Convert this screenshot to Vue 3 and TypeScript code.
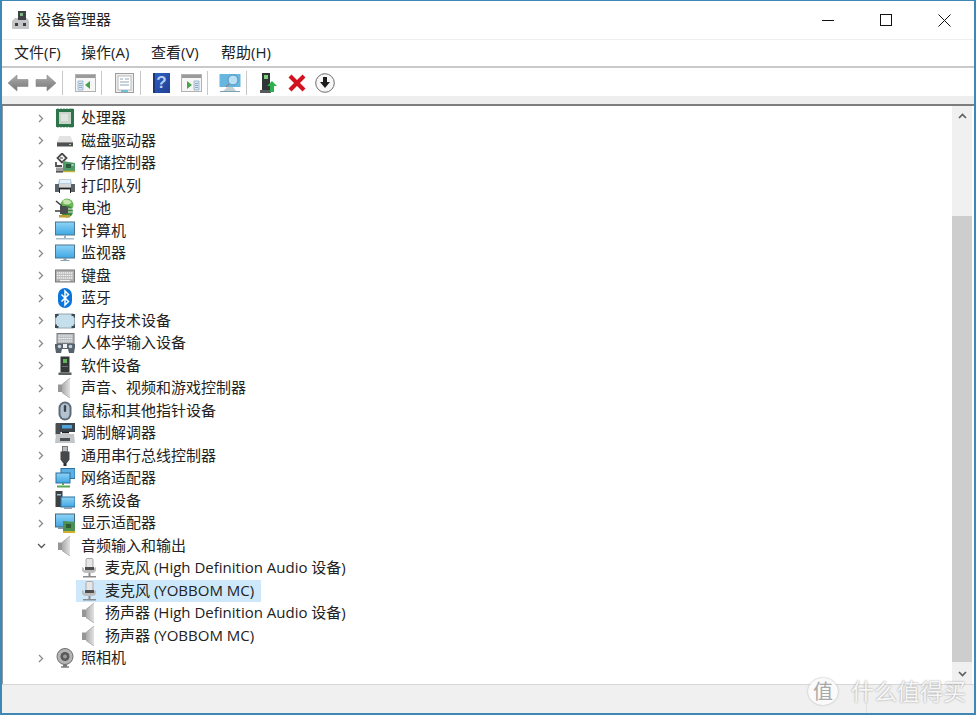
<script setup lang="ts">
interface TreeRow {
  label: string
  icon: string
  state: 'closed' | 'open' | 'child' | 'selected'
}

const menus: string[] = ['文件(F)', '操作(A)', '查看(V)', '帮助(H)']

const rows: TreeRow[] = [
  { label: '处理器', icon: 'cpu', state: 'closed' },
  { label: '磁盘驱动器', icon: 'disk', state: 'closed' },
  { label: '存储控制器', icon: 'storage', state: 'closed' },
  { label: '打印队列', icon: 'printer', state: 'closed' },
  { label: '电池', icon: 'battery', state: 'closed' },
  { label: '计算机', icon: 'computer', state: 'closed' },
  { label: '监视器', icon: 'monitor', state: 'closed' },
  { label: '键盘', icon: 'keyboard', state: 'closed' },
  { label: '蓝牙', icon: 'bluetooth', state: 'closed' },
  { label: '内存技术设备', icon: 'memory', state: 'closed' },
  { label: '人体学输入设备', icon: 'hid', state: 'closed' },
  { label: '软件设备', icon: 'software', state: 'closed' },
  { label: '声音、视频和游戏控制器', icon: 'speaker', state: 'closed' },
  { label: '鼠标和其他指针设备', icon: 'mouse', state: 'closed' },
  { label: '调制解调器', icon: 'modem', state: 'closed' },
  { label: '通用串行总线控制器', icon: 'usb', state: 'closed' },
  { label: '网络适配器', icon: 'network', state: 'closed' },
  { label: '系统设备', icon: 'system', state: 'closed' },
  { label: '显示适配器', icon: 'display', state: 'closed' },
  { label: '音频输入和输出', icon: 'speaker', state: 'open' },
  { label: '麦克风 (High Definition Audio 设备)', icon: 'mic', state: 'child' },
  { label: '麦克风 (YOBBOM MC)', icon: 'mic', state: 'selected' },
  { label: '扬声器 (High Definition Audio 设备)', icon: 'speaker', state: 'child' },
  { label: '扬声器 (YOBBOM MC)', icon: 'speaker', state: 'child' },
  { label: '照相机', icon: 'camera', state: 'closed' },
]
</script>

<template>
  <div class="window">
    <svg class="defs" width="0" height="0" aria-hidden="true">
      <defs>
        <linearGradient id="arrowGray" x1="0" y1="0" x2="0" y2="1">
          <stop offset="0" stop-color="#adadad" />
          <stop offset="1" stop-color="#767676" />
        </linearGradient>
        <linearGradient id="screenBlue" x1="0" y1="0" x2="0" y2="1">
          <stop offset="0" stop-color="#8fd4f7" />
          <stop offset="1" stop-color="#3fa6e2" />
        </linearGradient>
        <linearGradient id="helpBlue" x1="0" y1="0" x2="1" y2="1">
          <stop offset="0" stop-color="#2e62c4" />
          <stop offset="1" stop-color="#1e3f94" />
        </linearGradient>
        <linearGradient id="speakerCone" x1="0" y1="0" x2="1" y2="0">
          <stop offset="0" stop-color="#a9a9a9" />
          <stop offset="1" stop-color="#e2e2e2" />
        </linearGradient>
        <symbol id="i-cpu" viewBox="0 0 20 20">
          <rect x="1" y="1" width="18" height="18" fill="#2c7449" />
          <path d="M3 0v1M6 0v1M9 0v1M12 0v1M15 0v1M17 0v1M3 19v1M6 19v1M9 19v1M12 19v1M15 19v1M17 19v1" stroke="#6d9c7e" />
          <rect x="4" y="4" width="12" height="12" fill="#c9d4cb" />
          <rect x="6" y="6" width="7" height="7" fill="#e0e4de" />
        </symbol>
        <symbol id="i-disk" viewBox="0 0 20 20">
          <path d="M4.500 5h11l2.500 6H2z" fill="#e2e2e2" />
          <path d="M2 11h16v4.500H2z" fill="#4e5152" />
          <path d="M2 11h16v1H2z" fill="#8d8d8d" />
          <rect x="14" y="13" width="2" height="1" fill="#a9d68e" />
        </symbol>
        <symbol id="i-storage" viewBox="0 0 20 20">
          <path d="M7 0.500l4.500 4.500L7 9.500 2.500 5z" fill="none" stroke="#4a4a4a" stroke-width="1.800" />
          <path d="M5 5h3" stroke="#777" stroke-width="1.500" />
          <path d="M1 9v4h6" fill="none" stroke="#4f4f4f" stroke-width="1.800" />
          <path d="M8 8l12 2v8H8z" fill="#4f9a68" />
          <rect x="11" y="11" width="5" height="4" fill="#2a5a3c" />
          <rect x="16.500" y="11" width="2" height="2" fill="#a6d3b5" />
          <path d="M8 18.500h12" stroke="#c9b23a" stroke-width="1.400" />
          <rect x="1" y="14.500" width="7" height="5" fill="#9b9d9e" />
          <rect x="1" y="18" width="7" height="1.500" fill="#5a5a5a" />
        </symbol>
        <symbol id="i-printer" viewBox="0 0 20 20">
          <path d="M4 3h12l1 5H3z" fill="#b5d0e2" />
          <path d="M5 4h10v3H5z" fill="#e9f1f7" />
          <path d="M0 8h20v7H0z" fill="#d4d8db" />
          <path d="M0 8h4v8H0zM16 8h4v8h-4z" fill="#5c6368" />
          <path d="M4 12h12v5H4z" fill="#fff" />
          <path d="M4 12.500h12" stroke="#222" stroke-width="1.800" />
          <path d="M4.500 12v5M15.500 12v5" stroke="#222" />
        </symbol>
        <symbol id="i-battery" viewBox="0 0 20 20">
          <circle cx="12" cy="7" r="6.500" fill="#6fb55c" />
          <path d="M8 2.500c3-2 7-1 8.500 2-2 2-5 3-8 1z" fill="#c4e6ae" />
          <circle cx="12" cy="13.500" r="6" fill="#3e8a3c" />
          <path d="M1 3l6 5M0 13h7" stroke="#3c3c3c" stroke-width="1.500" />
          <path d="M5 8h6l2 2v5l-2 1H5z" fill="#4a4d4f" />
          <path d="M13 11h5M13 14h5" stroke="#e4e4e4" stroke-width="1.200" />
          <rect x="4" y="17" width="11" height="2.500" fill="#bfa02e" />
        </symbol>
        <symbol id="i-computer" viewBox="0 0 20 20">
          <rect x="0.500" y="1" width="19" height="13" fill="url(#screenBlue)" stroke="#4a7791" />
          <rect x="9" y="14" width="2" height="3" fill="#9db3c2" />
          <rect x="1" y="17" width="18" height="1.500" fill="#a9bdca" />
        </symbol>
        <symbol id="i-monitor" viewBox="0 0 20 20">
          <rect x="0.500" y="2" width="19" height="13" fill="url(#screenBlue)" stroke="#4a7791" />
          <rect x="8.500" y="15" width="3" height="2" fill="#8aa2b2" />
          <rect x="5.500" y="17" width="9" height="1" fill="#8aa2b2" />
        </symbol>
        <symbol id="i-keyboard" viewBox="0 0 20 20">
          <rect x="0.500" y="4" width="19" height="12" fill="#b0b0b0" stroke="#7a7a7a" />
          <path d="M2 7h16M2 9.500h16M2 12h16" stroke="#f2f2f2" stroke-dasharray="1.500 .5" stroke-width="1.400" />
          <path d="M5 14.500h10" stroke="#f2f2f2" stroke-width="1.200" />
        </symbol>
        <symbol id="i-bluetooth" viewBox="0 0 20 20">
          <rect x="3" y="0" width="14" height="20" rx="7" fill="#0a76dc" />
          <path d="M6.500 6.500l7 7-3.500 3.500V3l3.500 3.500-7 7" fill="none" stroke="#fff" stroke-width="1.500" />
        </symbol>
        <symbol id="i-memory" viewBox="0 0 20 20">
          <rect x="0.500" y="3" width="19" height="14" rx="1.500" fill="#c6dfed" stroke="#93a6b2" />
          <path d="M0 3h3.500v2H2v1.500H0zM16.500 3H20v3.500h-1.500V5h-2zM0 13.500h2V15h1.500v2H0zM18.500 13.500H20V17h-3.500v-2h2z" fill="#3d4a52" />
        </symbol>
        <symbol id="i-hid" viewBox="0 0 20 20">
          <rect x="2" y="0.500" width="17" height="10" fill="#b9bdc0" stroke="#767a7d" />
          <path d="M3.500 3h14M3.500 5.500h14M3.500 8h14" stroke="#f0f0f0" stroke-dasharray="1.500 .5" stroke-width="1.200" />
          <path d="M0 11h20v3l-1 6h-5l-1-4H7l-1 4H1l-1-6z" fill="#56636e" />
          <circle cx="4.500" cy="13.500" r="1.800" fill="#c6d0d6" />
          <circle cx="15.500" cy="13.500" r="1.800" fill="#c6d0d6" />
          <rect x="8" y="11" width="4" height="4" fill="#eef1f3" />
        </symbol>
        <symbol id="i-software" viewBox="0 0 20 20">
          <rect x="5.500" y="0.500" width="9" height="16" fill="#343838" />
          <rect x="8" y="3" width="4" height="4" fill="#62b45c" />
          <rect x="7" y="10" width="6" height="1" fill="#6a6d6d" />
          <rect x="3.500" y="16.500" width="13" height="2.500" fill="#5d6060" />
        </symbol>
        <symbol id="i-speaker" viewBox="0 0 20 20">
          <path d="M3 6.500h4.500v7.500H3z" fill="#969696" />
          <path d="M7 6.500l8-6.500v20l-8-5.500z" fill="url(#speakerCone)" />
          <path d="M7 6.500l8-6.500M7 14.500l8 5.500" stroke="#999" stroke-width=".7" />
        </symbol>
        <symbol id="i-mouse" viewBox="0 0 20 20">
          <rect x="3.500" y="0.500" width="13" height="19" rx="6.500" fill="#5e6b78" />
          <rect x="5.500" y="2.500" width="9" height="15" rx="4.500" fill="#b4c1cf" />
          <rect x="8.800" y="4" width="2.400" height="7" rx="1.200" fill="#3a434c" />
        </symbol>
        <symbol id="i-modem" viewBox="0 0 20 20">
          <rect x="0.500" y="0" width="5" height="12" rx="1" fill="#4a4e50" />
          <rect x="5" y="0" width="15" height="9" fill="#3c454b" />
          <rect x="7" y="2" width="10" height="3.500" fill="#4fa4dc" />
          <path d="M1 11h18l1 9H0z" fill="#c2c6c8" />
          <rect x="5" y="15" width="10" height="3" fill="#4c4f51" />
          <path d="M7 9.500h7" stroke="#222" stroke-width="1.500" />
        </symbol>
        <symbol id="i-usb" viewBox="0 0 20 20">
          <rect x="7.500" y="0.500" width="5" height="5" fill="#b9bdbf" stroke="#5f5f5f" stroke-width=".8" />
          <path d="M5.500 5.500h9v8l-2.500 3.500H8L5.500 13.500z" fill="#45484a" />
          <rect x="8.500" y="17" width="3" height="3" fill="#2a2c2d" />
        </symbol>
        <symbol id="i-network" viewBox="0 0 20 20">
          <rect x="6" y="0.500" width="14" height="10" fill="#5bb0e5" stroke="#2f6f9c" />
          <rect x="1" y="5" width="14" height="10" fill="url(#screenBlue)" stroke="#2f6f9c" />
          <path d="M8 15v2" stroke="#57a64f" stroke-width="2" />
          <path d="M2 18.500h13" stroke="#57a64f" stroke-width="2" />
        </symbol>
        <symbol id="i-system" viewBox="0 0 20 20">
          <rect x="0.500" y="0" width="7" height="16" fill="#3d4144" />
          <rect x="2" y="3" width="4" height="1.500" fill="#a0c8df" />
          <rect x="6" y="6" width="14" height="10" fill="url(#screenBlue)" stroke="#2f6f9c" />
          <rect x="9" y="16" width="8" height="2" fill="#8aa2b2" />
        </symbol>
        <symbol id="i-display" viewBox="0 0 20 20">
          <rect x="0.500" y="1" width="19" height="13" fill="url(#screenBlue)" stroke="#46687f" />
          <path d="M8 8l12 1v9H8z" fill="#4d8f55" />
          <rect x="11" y="11" width="5" height="4" fill="#2d5c34" />
          <path d="M8 18h12v2H8z" fill="#d3b02e" />
          <rect x="3" y="14" width="5" height="2" fill="#7f98a8" />
        </symbol>
        <symbol id="i-mic" viewBox="0 0 20 20">
          <rect x="7" y="0.500" width="7" height="9" rx="1" fill="#e6e6e6" stroke="#a8a8a8" />
          <rect x="6" y="9" width="9" height="4" fill="#4e4e4e" />
          <path d="M3 9v3c0 2 2 3 4 3h6c2 0 4-1 4-3V9l-2 1v2H5v-2z" fill="#bdbdbd" />
          <rect x="9.500" y="15" width="2" height="3" fill="#8b8b8b" />
          <rect x="4" y="18" width="13" height="1.500" fill="#8b8b8b" />
        </symbol>
        <symbol id="i-camera" viewBox="0 0 20 20">
          <circle cx="10" cy="8.500" r="8" fill="#b5b5b5" stroke="#6d6d6d" />
          <circle cx="10" cy="8.500" r="4.500" fill="#595959" />
          <circle cx="10" cy="8.500" r="2" fill="#9a9a9a" />
          <path d="M8 16.500h4v2H8z" fill="#777" />
          <path d="M6 18.500h8v1H6z" fill="#3f3f3f" />
        </symbol>
      </defs>
    </svg>

    <header class="titlebar">
      <svg class="app-icon" width="17" height="20" viewBox="0 0 17 20">
        <rect x="6" y="1" width="8" height="9" fill="#3e4246" />
        <rect x="8" y="3" width="3" height="3" fill="#7fb685" />
        <path d="M3 8h3v2h8V8h1l2 3v8H0v-8z" fill="#c4c6c7" />
        <rect x="3" y="13" width="3" height="3" fill="#3b3d3f" />
        <rect x="11" y="13" width="3" height="3" fill="#3b3d3f" />
      </svg>
      <span class="title">设备管理器</span>
      <div class="controls">
        <div class="ctl"><span class="min"></span></div>
        <div class="ctl"><span class="max"></span></div>
        <div class="ctl">
          <svg width="13" height="13" viewBox="0 0 13 13"><path d="M.5.500l12 12M12.500.500l-12 12" stroke="#111" fill="none" /></svg>
        </div>
      </div>
    </header>

    <nav class="menubar">
      <span v-for="m in menus" :key="m" class="menu">{{ m }}</span>
    </nav>

    <div class="toolbar">
      <span class="tb">
        <svg width="22" height="18" viewBox="0 0 22 18"><path d="M10 1L1 9l9 8v-4.500h11v-7H10z" fill="url(#arrowGray)" stroke="#8c8c8c" stroke-width=".6" /></svg>
      </span>
      <span class="tb">
        <svg width="22" height="18" viewBox="0 0 22 18"><path d="M12 1l9 8-9 8v-4.500H1v-7h11z" fill="url(#arrowGray)" stroke="#8c8c8c" stroke-width=".6" /></svg>
      </span>
      <span class="sep"></span>
      <span class="tb">
        <svg width="21" height="18" viewBox="0 0 21 18">
          <rect x=".5" y=".5" width="20" height="17" fill="#f6f6f6" stroke="#b2b2b2" />
          <rect x="1" y="1" width="19" height="3" fill="#9a9a9a" />
          <path d="M3 7h5v9H3z" fill="#d7e6f2" stroke="#7b9cb5" stroke-width=".6" />
          <path d="M4 9.500h3M4 11.500h3M4 13.500h3" stroke="#7b9cb5" stroke-width=".8" />
          <path d="M15 7v8l-5-4z" fill="#49a34a" />
        </svg>
      </span>
      <span class="sep"></span>
      <span class="tb">
        <svg width="19" height="20" viewBox="0 0 19 20">
          <rect x=".5" y=".5" width="18" height="19" fill="#ededed" stroke="#9e9e9e" />
          <rect x="3" y="3" width="13" height="14" fill="#fff" stroke="#b9b9b9" />
          <path d="M5 6h3M5 9h9M5 12h9M10 6h4" stroke="#8fa4b3" />
          <path d="M6 17h7v2H6z" fill="#6fc0d8" />
        </svg>
      </span>
      <span class="sep"></span>
      <span class="tb tb-help">
        <svg width="17" height="20" viewBox="0 0 17 20">
          <rect x="0" y="0" width="17" height="20" fill="url(#helpBlue)" />
          <rect x="0" y="0" width="2" height="20" fill="#1a377a" />
        </svg>
        <span class="help">?</span>
      </span>
      <span class="tb">
        <svg width="21" height="18" viewBox="0 0 21 18">
          <rect x=".5" y=".5" width="20" height="17" fill="#f6f6f6" stroke="#b2b2b2" />
          <rect x="1" y="1" width="19" height="3" fill="#9a9a9a" />
          <path d="M13 7h5v9h-5z" fill="#d7e6f2" stroke="#7b9cb5" stroke-width=".6" />
          <path d="M14 9.500h3M14 11.500h3M14 13.500h3" stroke="#7b9cb5" stroke-width=".8" />
          <path d="M6 7v8l5-4z" fill="#49a34a" />
        </svg>
      </span>
      <span class="sep"></span>
      <span class="tb">
        <svg width="22" height="20" viewBox="0 0 22 20">
          <rect x=".5" y="1" width="21" height="13" fill="#66b6df" />
          <path d="M9 14l-5 4h13l-3-4z" fill="#c5ced3" />
          <path d="M1 18.500h20" stroke="#7f9fb2" />
          <circle cx="14" cy="7" r="5" fill="#b9dff2" stroke="#4e94bf" />
          <path d="M10 11l-3 3" stroke="#888" stroke-width="1.500" />
        </svg>
      </span>
      <span class="sep"></span>
      <span class="tb">
        <svg width="18" height="21" viewBox="0 0 18 21">
          <rect x="2" y="0" width="8" height="17" fill="#2f3436" />
          <rect x="4" y="2" width="4" height="4" fill="#7ed07c" />
          <rect x="0" y="17" width="11" height="3" fill="#55595b" />
          <path d="M12 8l5 5h-3v6h-4v-6H7z" fill="#2bb24c" />
        </svg>
      </span>
      <span class="tb">
        <svg width="18" height="18" viewBox="0 0 18 18"><path d="M2 2l14 14M16 2L2 16" stroke="#d2121d" stroke-width="4.200" /></svg>
      </span>
      <span class="tb">
        <svg width="20" height="20" viewBox="0 0 20 20">
          <circle cx="10" cy="10" r="9.300" fill="#f7f7f7" stroke="#6d6d6d" />
          <path d="M8 4h4v5h3l-5 6-5-6h3z" fill="#1d1d1d" />
        </svg>
      </span>
    </div>

    <div class="band"></div>

    <div class="content">
      <div class="tree">
        <div
          v-for="r in rows"
          :key="r.label"
          class="row"
          :class="{ child: r.state === 'child' || r.state === 'selected', selected: r.state === 'selected' }"
        >
          <span v-if="r.state === 'closed' || r.state === 'open'" class="twist">
            <svg v-if="r.state === 'closed'" width="6" height="9" viewBox="0 0 6 9"><path d="M1 1l3.500 3.500L1 8" fill="none" stroke="#8a8a8a" stroke-width="1.300" /></svg>
            <svg v-else width="9" height="6" viewBox="0 0 9 6"><path d="M1 1l3.500 3.500L8 1" fill="none" stroke="#555" stroke-width="1.300" /></svg>
          </span>
          <svg class="icon" width="20" height="20"><use :href="'#i-' + r.icon" /></svg>
          <span class="label">{{ r.label }}</span>
        </div>
      </div>
      <aside class="scroll">
        <span class="arrow">
          <svg width="9" height="6" viewBox="0 0 9 6"><path d="M1 5l3.500-3.500L8 5" fill="none" stroke="#606060" stroke-width="1.700" /></svg>
        </span>
        <div class="track"><div class="thumb"></div></div>
        <span class="arrow">
          <svg width="9" height="6" viewBox="0 0 9 6"><path d="M1 1l3.500 3.500L8 1" fill="none" stroke="#606060" stroke-width="1.700" /></svg>
        </span>
      </aside>
    </div>

    <footer class="status"><span class="pane"></span></footer>

    <div class="watermark">
      <span class="badge">值</span>
      <span class="brand">什么值得买</span>
    </div>
  </div>
</template>

<style>
html,
body {
  margin: 0;
  background: #fff;
}
</style>

<style scoped>
.window {
  position: relative;
  box-sizing: border-box;
  width: 976px;
  height: 715px;
  display: flex;
  flex-direction: column;
  overflow: hidden;
  border: 2px solid #3f87b4;
  border-top-width: 1px;
  background: #fff;
  color: #222;
  font: 15px/20px "Open Sans", "Noto Sans CJK SC", sans-serif;
}
.defs {
  position: absolute;
}
.titlebar {
  height: 38px;
  flex: none;
  display: flex;
  align-items: center;
  padding-left: 10px;
  border-bottom: 1px solid #efefef;
}
.app-icon {
  margin-right: 7px;
}
.title {
  margin-bottom: 2px;
}
.controls {
  margin-left: auto;
  display: flex;
  align-self: stretch;
  margin-right: 1px;
}
.ctl {
  width: 58px;
  display: flex;
  align-items: center;
  justify-content: center;
}
.min {
  width: 12px;
  height: 1px;
  background: #111;
}
.max {
  width: 10px;
  height: 10px;
  border: 1px solid #111;
}
.menubar {
  height: 26px;
  flex: none;
  display: flex;
  align-items: center;
  padding-left: 2px;
  border-bottom: 2px solid #c9c9c9;
}
.menu {
  width: 50px;
  padding: 0 10px;
  margin-bottom: 2px;
  white-space: nowrap;
}
.menu:first-child {
  width: 47px;
}
.toolbar {
  box-sizing: border-box;
  height: 28px;
  flex: none;
  display: flex;
  align-items: center;
  padding: 2px 0 0 2px;
}
.tb {
  position: relative;
  width: 28px;
  height: 26px;
  display: flex;
  align-items: center;
  justify-content: center;
}
.tb-help {
  box-sizing: border-box;
  justify-content: flex-start;
  padding-left: 4px;
}
.help {
  position: absolute;
  top: 0;
  left: 4px;
  width: 17px;
  text-align: center;
  color: #b9cdf0;
  font: bold 17px/26px "Liberation Sans", sans-serif;
}
.sep {
  width: 1px;
  height: 24px;
  margin: 0 8px 0 2px;
  background: #c8c8c8;
}
.band {
  height: 8px;
  flex: none;
  background: #eeeeee;
  border-bottom: 2px solid #7d7d7d;
}
.content {
  flex: 1;
  min-height: 0;
  display: flex;
  border-left: 1px solid #8f9aa3;
  padding-right: 2px;
}
.tree {
  flex: 1;
  padding-top: 1px;
}
.row {
  height: 22.5px;
  display: flex;
  align-items: center;
  width: max-content;
  padding-left: 32px;
}
.twist {
  width: 12px;
  display: flex;
  justify-content: center;
  margin-right: 8px;
}
.icon {
  flex: none;
}
.label {
  margin: 0 0 2px 6px;
  white-space: nowrap;
}
.child {
  margin-left: 73px;
  padding-left: 3px;
  padding-right: 7px;
}
.selected {
  background: #cde8fb;
}
.scroll {
  width: 20px;
  flex: none;
  display: flex;
  flex-direction: column;
  background: #f0f0f0;
}
.arrow {
  height: 20px;
  flex: none;
  display: flex;
  align-items: center;
  justify-content: center;
}
.track {
  flex: 1;
  padding-top: 90px;
}
.thumb {
  height: 446px;
  background: #cdcdcd;
}
.status {
  height: 28px;
  flex: none;
  display: flex;
  background: #f0f0f0;
  border-top: 1px solid #d7d7d7;
}
.pane {
  width: 864px;
  border-right: 1px solid #e2e2e2;
}
.watermark {
  position: absolute;
  left: 806px;
  top: 675px;
  display: flex;
  align-items: center;
  pointer-events: none;
}
.badge {
  width: 30px;
  height: 27px;
  border-radius: 50%;
  background: #fafafa;
  box-shadow: 0 0 2px #aaa;
  color: #a8a8a8;
  font-size: 20px;
  line-height: 27px;
  text-align: center;
}
.brand {
  margin-left: 13px;
  color: #f6f6f6;
  font-size: 23px;
  line-height: 30px;
  text-shadow: 0 0 2px #8f8f8f;
}
</style>
